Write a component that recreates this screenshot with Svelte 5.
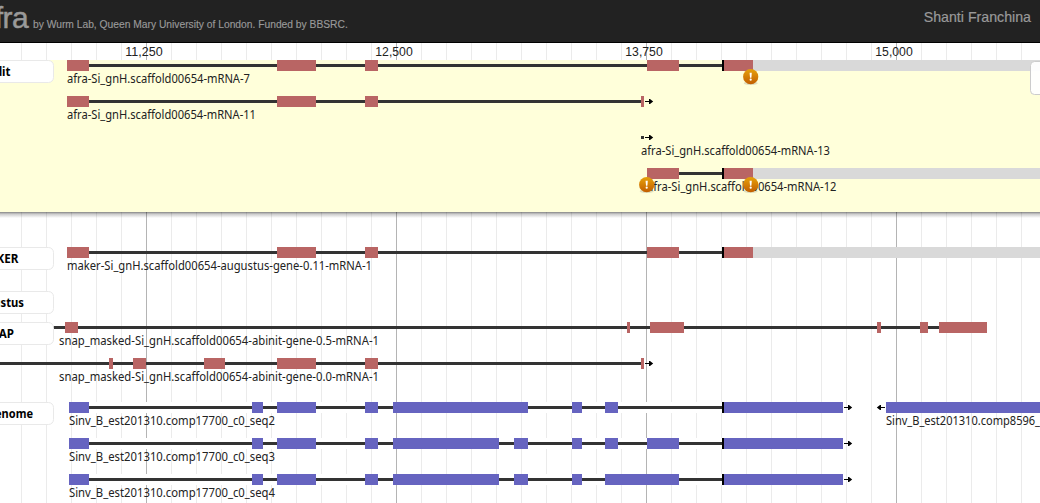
<script>
  const RED = '#b96564';
  const BLUE = '#6664c0';
  const minor = Array.from({ length: 41 }, (_, i) => 21 + i * 25);
  const ticks = [
    { x: 144, text: '11,250' },
    { x: 394, text: '12,500' },
    { x: 644, text: '13,750' },
    { x: 894, text: '15,000' }
  ];
  const isMajor = (x) => (x - 146) % 250 === 0;

  const genes = [
    { y: 60, line: [67, 753], color: RED, bars: [[67, 89], [277, 316], [365, 378], [647, 679], [724, 753]], edge: 722, rest: 753, label: 'afra-Si_gnH.scaffold00654-mRNA-7', lx: 67, lw: 183 },
    { y: 96, line: [67, 644], color: RED, bars: [[67, 89], [277, 316], [365, 378], [641, 644]], arrow: 644, label: 'afra-Si_gnH.scaffold00654-mRNA-11', lx: 67, lw: 189 },
    { y: 132, line: [641, 644], color: RED, bars: [], arrow: 644, label: 'afra-Si_gnH.scaffold00654-mRNA-13', lx: 641, lw: 189 },
    { y: 168, line: [647, 753], color: RED, bars: [[647, 679], [724, 753]], edge: 722, rest: 753, label: 'afra-Si_gnH.scaffold00654-mRNA-12', lx: 647, lw: 189.5 },
    { y: 247, line: [67, 753], color: RED, bars: [[67, 89], [277, 316], [365, 378], [647, 679], [724, 753]], edge: 722, rest: 753, label: 'maker-Si_gnH.scaffold00654-augustus-gene-0.11-mRNA-1', lx: 67, lw: 305 },
    { y: 322, line: [0, 987], color: RED, bars: [[65, 78], [627, 630], [650, 684], [877, 881], [920, 928], [939, 987]], label: 'snap_masked-Si_gnH.scaffold00654-abinit-gene-0.5-mRNA-1', lx: 59, lw: 320 },
    { y: 358, line: [0, 644], color: RED, bars: [[109, 113], [133, 146], [204, 225], [277, 316], [365, 378], [641, 644]], arrow: 644, label: 'snap_masked-Si_gnH.scaffold00654-abinit-gene-0.0-mRNA-1', lx: 59, lw: 320 },
    { y: 402, line: [69, 843], color: BLUE, mask: true, bars: [[69, 89], [252, 263], [277, 316], [365, 378], [393, 528], [572, 582], [605, 618], [724, 843]], edge: 722, arrow: 843, label: 'Sinv_B_est201310.comp17700_c0_seq2', lx: 69, lw: 206 },
    { y: 438, line: [69, 843], color: BLUE, mask: true, bars: [[69, 89], [252, 263], [277, 316], [365, 378], [393, 499], [514, 528], [572, 582], [605, 618], [647, 679], [724, 843]], edge: 722, arrow: 843, label: 'Sinv_B_est201310.comp17700_c0_seq3', lx: 69, lw: 206 },
    { y: 474, line: [69, 843], color: BLUE, mask: true, bars: [[69, 89], [252, 263], [277, 316], [365, 378], [393, 499], [514, 528], [572, 582], [605, 679], [724, 843]], edge: 722, arrow: 843, label: 'Sinv_B_est201310.comp17700_c0_seq4', lx: 69, lw: 206 },
    { y: 402, line: [886, 1040], color: BLUE, bars: [[886, 1040]], back: 886, label: 'Sinv_B_est201310.comp8596_', lx: 886, lw: 154 }
  ];

  const tracks = [
    { y: 60, end: 10.5, name: 'Edit', w: 22 },
    { y: 247, end: 18.5, name: 'MAKER', w: 41 },
    { y: 291, end: 24, name: 'Augustus', w: 53 },
    { y: 322, end: 14, name: 'SNAP', w: 31 },
    { y: 402, end: 33, name: 'Genome', w: 46 }
  ];
  const warnings = [[750.7, 76.7], [646.7, 184.7], [750.7, 184.7]];
</script>

<div class="app">
  <header>
    <div class="brand"><span class="name">Afra</span><span class="by">by Wurm Lab, Queen Mary University of London. Funded by BBSRC.</span></div>
    <span class="user">Shanti Franchina</span>
  </header>
  <svg class="browser" viewBox="0 43 1040 460" width="1040" height="460">
    <defs>
      <linearGradient id="warn" x1="0" y1="0" x2="0" y2="1">
        <stop offset="0" stop-color="#e6a10b" />
        <stop offset="1" stop-color="#c25e00" />
      </linearGradient>
      <linearGradient id="shade" x1="0" y1="0" x2="0" y2="1">
        <stop offset="0" stop-color="#000" stop-opacity=".48" />
        <stop offset=".35" stop-color="#000" stop-opacity=".2" />
        <stop offset="1" stop-color="#000" stop-opacity="0" />
      </linearGradient>
    </defs>
    <rect y="43" width="1040" height="460" fill="#fff" />
    {#each minor as x}
      <rect {x} y="43" width="1" height="460" fill={isMajor(x) ? '#b4b4b4' : '#ebebeb'} />
    {/each}
    {#each ticks as t}
      <text class="tick" x={t.x} y="56" text-anchor="middle" textLength="37.4" lengthAdjust="spacingAndGlyphs">{t.text}</text>
    {/each}
    <rect y="60" width="1040" height="152" fill="#ffffda" />
    <rect y="212" width="1040" height="6" fill="url(#shade)" />

    {#each genes as g}
      {#if g.mask}<rect x={g.line[0]} y={g.y} width={g.line[1] - g.line[0]} height="11" fill="#fff" />{/if}
      {#if g.rest}<rect x={g.rest} y={g.y} width={1040 - g.rest} height="11" fill="#d9d9d9" />{/if}
      <rect x={g.line[0]} y={g.y + 4} width={g.line[1] - g.line[0]} height="3" fill="#333" />
      {#each g.bars as b}
        <rect x={b[0]} y={g.y} width={b[1] - b[0]} height="11" fill={g.color} />
      {/each}
      {#if g.edge}<rect x={g.edge} y={g.y} width="2" height="11" fill="#000" />{/if}
      {#if g.arrow}<path d="M{g.arrow + 1} {g.y + 5}h4v-2h1l3.2 2.5l-3.2 2.5h-1v-2h-4z" />{/if}
      {#if g.back}<path d="M{g.back - 1} {g.y + 5}h-4v-2h-1l-3.2 2.5l3.2 2.5h1v-2h4z" />{/if}
      <text class="label" x={g.lx} y={g.y + 22.5} textLength={g.lw} lengthAdjust="spacingAndGlyphs">{g.label}</text>
    {/each}

    {#each tracks as t}
      <rect x="-9.5" y={t.y + 0.5} width="63" height="22" rx="5" fill="#fff" stroke="#e9e9e9" />
      <text class="track" x={t.end - t.w} y={t.y + 16} textLength={t.w} lengthAdjust="spacingAndGlyphs">{t.name}</text>
    {/each}

    {#each warnings as [x, y]}
      <ellipse cx={x} cy={y + 6.5} rx="7" ry="1.8" fill="#000" opacity=".12" />
      <circle cx={x} cy={y} r="7.6" fill="url(#warn)" />
      <path d="M{x - 1.1} {y - 4}h2.2l-.4 5.1h-1.4z" fill="#fff" />
      <circle cx={x} cy={y + 3} r="1.1" fill="#fff" />
    {/each}

    <rect x="1030.5" y="61.5" width="30" height="33" rx="4" fill="#fff" fill-opacity=".94" stroke="#ccc" />
  </svg>
</div>

<style>
  .app {
    width: 1040px;
    height: 503px;
    overflow: hidden;
    background: #fff;
    display: flex;
    flex-direction: column;
  }
  header {
    box-sizing: border-box;
    height: 43px;
    flex: none;
    background: #222;
    border-bottom: 1px solid #000;
    color: #999;
    font-family: "Liberation Sans", Arial, sans-serif;
    display: flex;
    justify-content: space-between;
    padding-right: 9px;
    white-space: nowrap;
  }
  .brand {
    display: flex;
    align-items: baseline;
    gap: 5px;
    margin-left: -27px;
    line-height: 36px;
  }
  .name {
    font-size: 30px;
    letter-spacing: -.6px;
    width: 55px;
    display: flex;
    justify-content: flex-end;
    -webkit-text-stroke: .5px #999;
  }
  .by { font-size: 10.27px; -webkit-text-stroke: .15px #999; }
  .user { font-size: 14.2px; line-height: 34px; -webkit-text-stroke: .2px #999; }
  .browser { display: block; flex: none; }
  .tick { font: 12px "Liberation Sans", Arial, sans-serif; fill: #222; }
  .label { font: 12px "Noto Sans", sans-serif; fill: #222; }
  .track { font: bold 12px "Noto Sans", sans-serif; fill: #000; }
</style>
